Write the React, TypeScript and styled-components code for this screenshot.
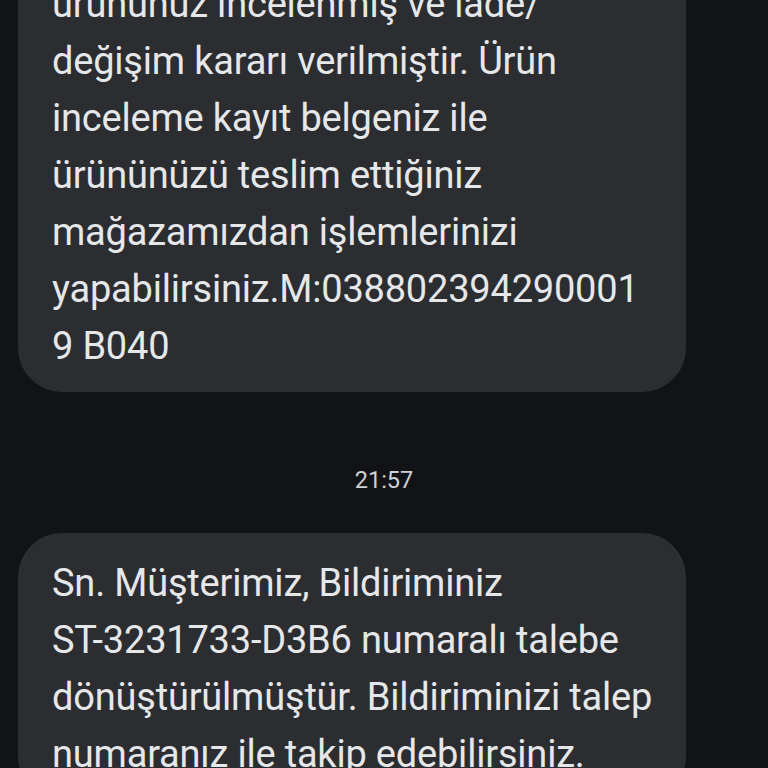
import React from "react";
import styled, { createGlobalStyle } from "styled-components";

const GlobalStyle = createGlobalStyle`
  html, body {
    margin: 0;
    padding: 0;
    background: #111317;
  }
  body {
    font-family: Roboto, "Noto Sans", sans-serif;
    overflow: hidden;
  }
`;

const Screen = styled.div`
  width: 768px;
  height: 768px;
  overflow: hidden;
  background: #111317;
`;

// scrolled thread: the first bubble starts above the top edge
const Thread = styled.div`
  display: flex;
  flex-direction: column;
  margin-top: -46px;
`;

const Bubble = styled.div`
  margin-left: 18px;
  width: 668px;
  box-sizing: border-box;
  padding: 22px 24px 17px 34px;
  background: #2b2d31;
  border-radius: 44px;
  color: #e6e7e9;
  font-size: 38px;
  line-height: 57px;
  letter-spacing: -0.2px;
`;

const Line = styled.div`
  white-space: nowrap;
`;

const TimeRow = styled.div`
  padding: 76px 0 41px;
  text-align: center;
  color: #cfd1d4;
  font-size: 23.5px;
  line-height: 24px;
`;

const first = [
  "ürününüz incelenmiş ve iade/",
  "değişim kararı verilmiştir. Ürün",
  "inceleme kayıt belgeniz ile",
  "ürününüzü teslim ettiğiniz",
  "mağazamızdan işlemlerinizi",
  "yapabilirsiniz.M:038802394290001",
  "9 B040",
];

const second = [
  "Sn. Müşterimiz, Bildiriminiz",
  "ST-3231733-D3B6 numaralı talebe",
  "dönüştürülmüştür. Bildiriminizi talep",
  "numaranız ile takip edebilirsiniz.",
];

function Message({ lines }: { lines: string[] }) {
  return (
    <Bubble>
      {lines.map((l) => (
        <Line key={l}>{l}</Line>
      ))}
    </Bubble>
  );
}

export default function App() {
  return (
    <>
      <GlobalStyle />
      <Screen>
        <Thread>
          <Message lines={first} />
          <TimeRow>21:57</TimeRow>
          <Message lines={second} />
        </Thread>
      </Screen>
    </>
  );
}
